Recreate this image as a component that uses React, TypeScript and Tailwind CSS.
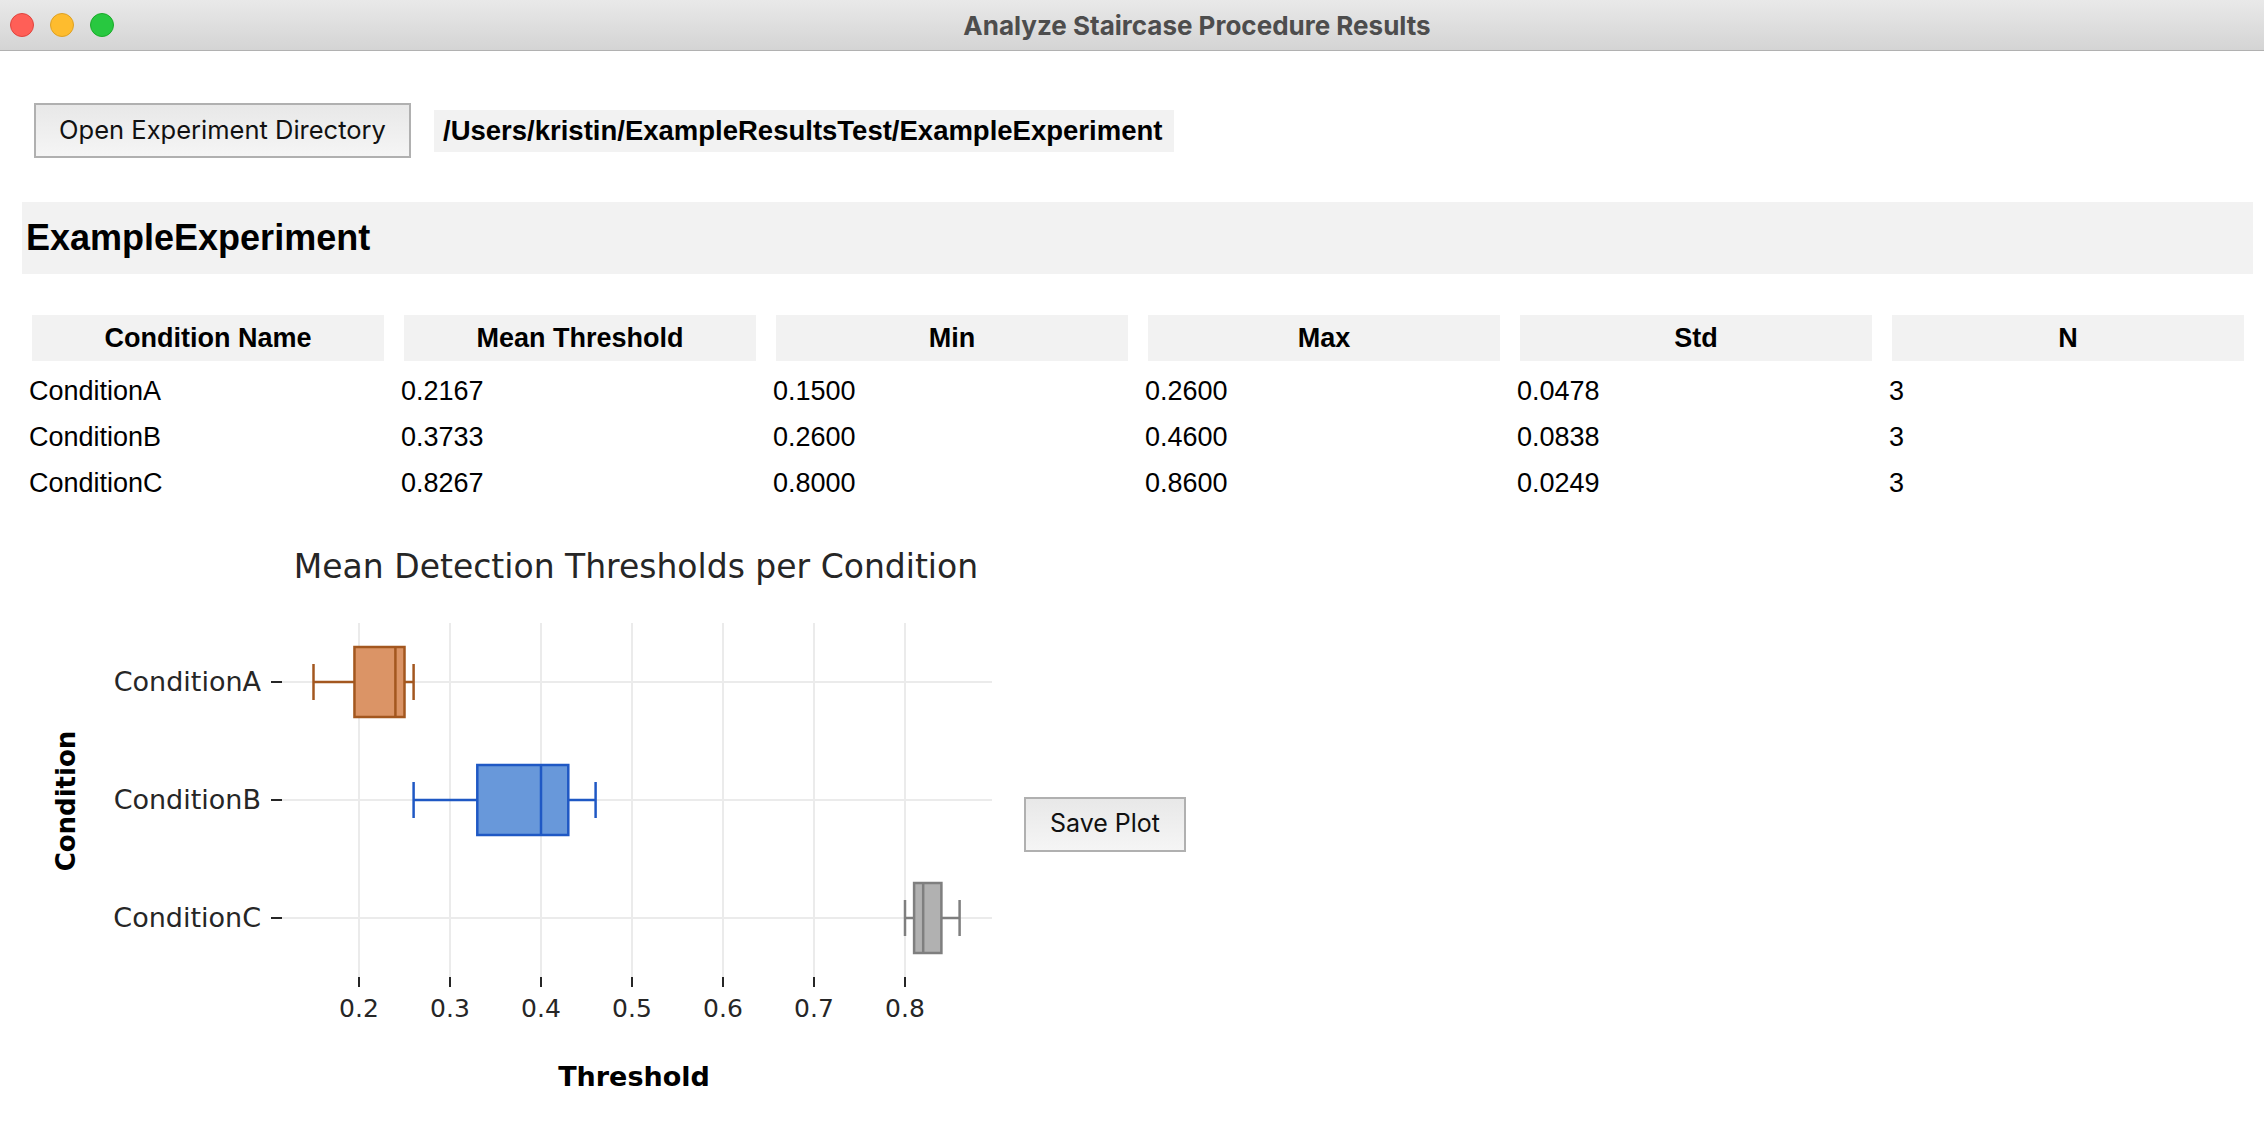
import React from "react";

const rows = [
  { name: "ConditionA", mean: "0.2167", min: "0.1500", max: "0.2600", std: "0.0478", n: "3" },
  { name: "ConditionB", mean: "0.3733", min: "0.2600", max: "0.4600", std: "0.0838", n: "3" },
  { name: "ConditionC", mean: "0.8267", min: "0.8000", max: "0.8600", std: "0.0249", n: "3" },
];

const headers = ["Condition Name", "Mean Threshold", "Min", "Max", "Std", "N"];

// box stats per condition: [min, q1, median, q3, max]
const boxes = [
  { label: "ConditionA", stats: [0.15, 0.195, 0.24, 0.25, 0.26], fill: "#db9466", edge: "#a3571f" },
  { label: "ConditionB", stats: [0.26, 0.33, 0.4, 0.43, 0.46], fill: "#6898da", edge: "#1f58c4" },
  { label: "ConditionC", stats: [0.8, 0.81, 0.82, 0.84, 0.86], fill: "#b1b1b1", edge: "#7f7f7f" },
];

const X0 = 282;
const X1 = 992;
const Y0 = 92;
const Y1 = 446;
const xs = (v: number) => 359 + (v - 0.2) * 910;
const rowY = [151, 269, 387];
const ticks = [0.2, 0.3, 0.4, 0.5, 0.6, 0.7, 0.8];

function BoxPlot() {
  return (
    <svg width={1000} height={586} viewBox="0 0 1000 586" style={{ fontFamily: "'DejaVu Sans', sans-serif" }}>
      <text x={636} y={47} fontSize={33} textAnchor="middle" fill="#262626">
        Mean Detection Thresholds per Condition
      </text>
      {ticks.map((t) => (
        <g key={t}>
          <line x1={xs(t)} x2={xs(t)} y1={Y0} y2={Y1} stroke="#ebebeb" strokeWidth={2} />
          <line x1={xs(t)} x2={xs(t)} y1={Y1} y2={Y1 + 10} stroke="#262626" strokeWidth={2} />
          <text x={xs(t)} y={486} fontSize={25} textAnchor="middle" fill="#262626">
            {t.toFixed(1)}
          </text>
        </g>
      ))}
      {rowY.map((y, i) => (
        <g key={y}>
          <line x1={X0} x2={X1} y1={y} y2={y} stroke="#ebebeb" strokeWidth={2} />
          <line x1={271} x2={X0} y1={y} y2={y} stroke="#262626" strokeWidth={2} />
          <text x={261} y={y + 9} fontSize={27} textAnchor="end" fill="#262626">
            {boxes[i].label}
          </text>
        </g>
      ))}
      {boxes.map((b, i) => {
        const y = rowY[i];
        const [mn, q1, md, q3, mx] = b.stats.map(xs);
        return (
          <g key={b.label} stroke={b.edge} strokeWidth={2.5}>
            <line x1={mn} x2={q1} y1={y} y2={y} />
            <line x1={q3} x2={mx} y1={y} y2={y} />
            <line x1={mn} x2={mn} y1={y - 18} y2={y + 18} />
            <line x1={mx} x2={mx} y1={y - 18} y2={y + 18} />
            <rect x={q1} y={y - 35} width={q3 - q1} height={70} fill={b.fill} />
            <line x1={md} x2={md} y1={y - 35} y2={y + 35} />
          </g>
        );
      })}
      <text x={634} y={555} fontSize={27} fontWeight="bold" textAnchor="middle" fill="#000">
        Threshold
      </text>
      <text x={75} y={270} fontSize={26} fontWeight="bold" textAnchor="middle" fill="#000" transform="rotate(-90 75 270)">
        Condition
      </text>
    </svg>
  );
}

export default function App() {
  return (
    <div className="w-[2264px] h-[1126px] bg-white overflow-hidden font-['Liberation_Sans',Arial,sans-serif] text-black">
      <div className="h-[51px] flex items-center border-b border-[#b1b1b1] bg-gradient-to-b from-[#e9e9e9] to-[#d4d4d4]">
        <div className="flex gap-[16px] pl-[10px]">
          <div className="w-[24px] h-[24px] rounded-full bg-[#ff5f57] border border-[#e0443e]" />
          <div className="w-[24px] h-[24px] rounded-full bg-[#febc2e] border border-[#dea123]" />
          <div className="w-[24px] h-[24px] rounded-full bg-[#28c840] border border-[#1aab29]" />
        </div>
        <div className="flex-1 text-center pl-[16px] font-['Inter',sans-serif] font-bold text-[26px] text-[#4d4d4d]">
          Analyze Staircase Procedure Results
        </div>
      </div>

      <div className="flex items-center pl-[34px] pt-[52px] gap-[23px]">
        <button className="w-[377px] h-[55px] border-2 border-[#b0b0b0] bg-gradient-to-b from-[#e8e8e8] to-[#f5f5f5] font-['Inter',sans-serif] text-[25.5px] text-[#111]">
          Open Experiment Directory
        </button>
        <div className="h-[42px] w-[740px] bg-[#f2f2f2] flex items-center pl-[9px] font-bold text-[27.5px]">
          /Users/kristin/ExampleResultsTest/ExampleExperiment
        </div>
      </div>

      <div className="mt-[44px] ml-[22px] mr-[11px] h-[72px] bg-[#f2f2f2] flex items-center pl-[4px] font-bold text-[36px]">
        ExampleExperiment
      </div>

      <div className="mt-[41px] ml-[32px] w-[2212px] grid grid-cols-6 gap-x-[20px]">
        {headers.map((h) => (
          <div key={h} className="h-[46px] bg-[#f2f2f2] flex items-center justify-center font-bold text-[27px]">
            {h}
          </div>
        ))}
      </div>
      <div className="mt-[7px] ml-[29px] w-[2212px]">
        {rows.map((r) => (
          <div key={r.name} className="grid grid-cols-6 gap-x-[20px] h-[46px] items-center text-[27px]">
            <div>{r.name}</div>
            <div>{r.mean}</div>
            <div>{r.min}</div>
            <div>{r.max}</div>
            <div>{r.std}</div>
            <div>{r.n}</div>
          </div>
        ))}
      </div>

      <div className="mt-[25px] flex items-center">
        <BoxPlot />
        <button className="ml-[24px] w-[162px] h-[55px] border-2 border-[#b0b0b0] bg-gradient-to-b from-[#e8e8e8] to-[#f5f5f5] font-['Inter',sans-serif] text-[25px] text-[#111]">
          Save Plot
        </button>
      </div>
    </div>
  );
}
